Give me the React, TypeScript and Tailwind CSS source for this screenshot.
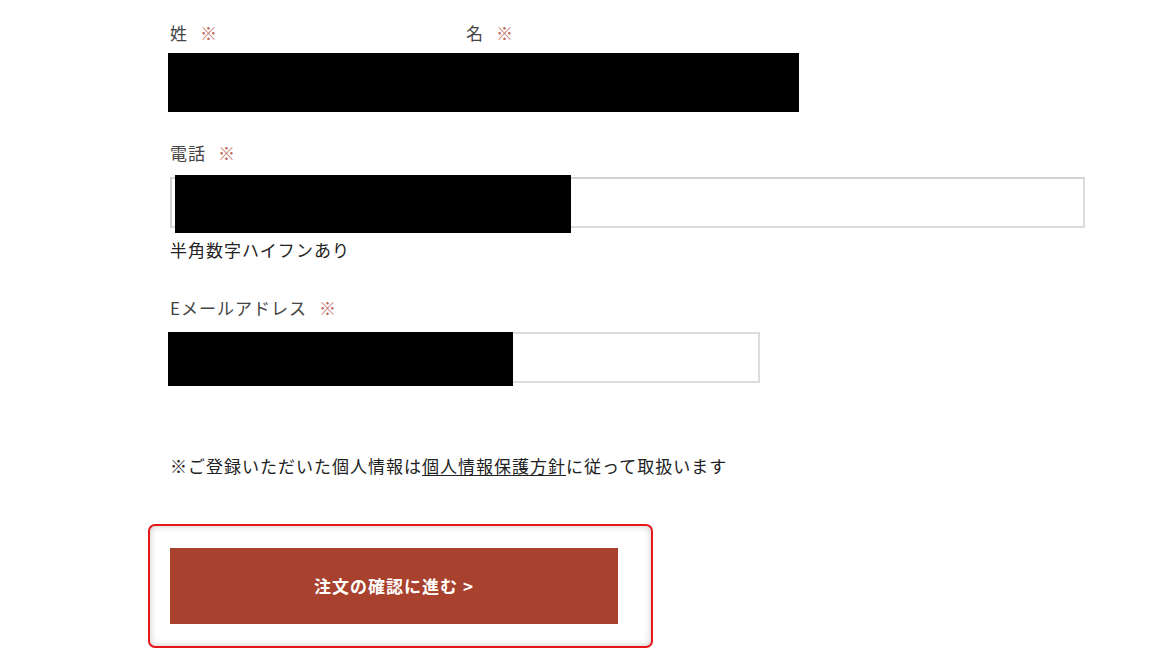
import React from "react";

const font = { fontFamily: '"Noto Sans CJK JP", "Noto Sans", sans-serif' };

function Label({ text }: { text: string }) {
  return (
    <div className="text-[17px] leading-[24px] tracking-[1px] text-[#444]">
      {text}
      <span className="ml-[12px] text-[#c06a62]">※</span>
    </div>
  );
}

function Redact({ className }: { className: string }) {
  return <div className={"absolute bg-black " + className} />;
}

export default function App() {
  return (
    <div className="min-h-[666px] bg-white" style={font}>
      <div className="pl-[170px] pt-[21px]">
        {/* name */}
        <div className="relative">
          <div className="flex">
            <div className="w-[296px]">
              <Label text="姓" />
              <div className="mt-[8px] h-[59px] w-[285px] border-2 border-[#ececec] bg-white" />
            </div>
            <div className="w-[330px]">
              <Label text="名" />
              <div className="mt-[8px] h-[59px] w-[328px] border-2 border-[#ececec] bg-white" />
            </div>
          </div>
          <Redact className="left-[-2px] top-[32px] h-[59px] w-[631px]" />
        </div>

        {/* phone */}
        <div className="relative mt-[29px]">
          <Label text="電話" />
          <div className="mt-[12px] h-[51px] w-[915px] border-2 border-[#dcdcdc] border-t-[#d2d2d2] border-l-[#d2d2d2] bg-white" />
          <Redact className="left-[5px] top-[34px] h-[58px] w-[396px]" />
          <div className="mt-[10px] text-[17px] leading-[24px] tracking-[1px] text-[#222]">半角数字ハイフンあり</div>
        </div>

        {/* email */}
        <div className="relative mt-[34px]">
          <Label text="Eメールアドレス" />
          <div className="ml-[-2px] mt-[12px] h-[51px] w-[592px] border-2 border-[#dcdcdc] bg-white" />
          <Redact className="left-[-2px] top-[36px] h-[54px] w-[345px]" />
        </div>

        <p className="mt-[71px] text-[17px] leading-[24px] tracking-[1px] text-[#222]">
          ※ご登録いただいた個人情報は
          <a className="underline underline-offset-2">個人情報保護方針</a>
          に従って取扱います
        </p>

        <div className="ml-[-22px] mt-[46px] inline-block rounded-[7px] border-2 border-[#e8151b] pb-[22px] pl-[20px] pr-[33px] pt-[22px] shadow-[inset_0_0_7px_rgba(0,0,0,0.22)]">
          <button className="flex h-[76px] w-[448px] items-center justify-center bg-[#a8412d] text-[17px] font-bold tracking-[1px] text-white">
            注文の確認に進む &gt;
          </button>
        </div>
      </div>
    </div>
  );
}
